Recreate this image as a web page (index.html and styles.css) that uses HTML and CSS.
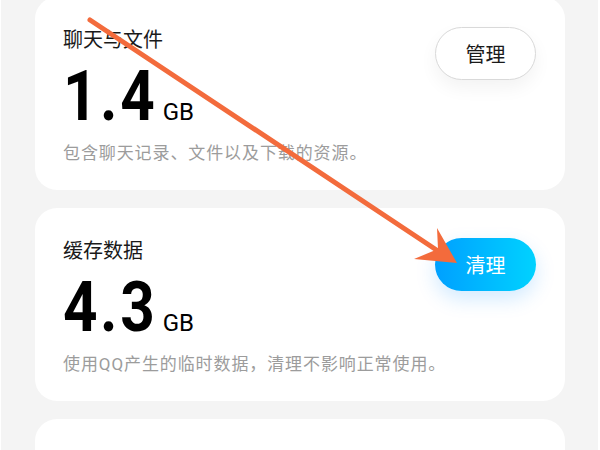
FILE: index.html
```html
<html lang="zh-CN">

<head>
    <meta charset="utf-8" />
    <title>存储空间</title>
    <link rel="stylesheet" href="styles.css">
</head>

<body>
    <div class="screen">
        <div class="cards">
            <div class="card">
                <div class="card-info">
                    <div class="card-title">聊天与文件</div>
                    <div class="card-size"><span class="card-number">1.4</span><span class="card-unit">GB</span></div>
                    <div class="card-desc">包含聊天记录、文件以及下载的资源。</div>
                </div>
                <div class="card-button">管理</div>
            </div>
            <div class="card">
                <div class="card-info">
                    <div class="card-title">缓存数据</div>
                    <div class="card-size"><span class="card-number">4.3</span><span class="card-unit">GB</span></div>
                    <div class="card-desc">使用QQ产生的临时数据，清理不影响正常使用。</div>
                </div>
                <div class="card-button card-button-primary">清理</div>
            </div>
            <div class="card card-empty"></div>
        </div>

        <!-- annotation arrow drawn over the screenshot -->
        <svg class="arrow" width="600" height="450" viewBox="0 0 600 450">
            <line x1="90" y1="20" x2="438" y2="251" stroke="#f36b3c" stroke-width="5" stroke-linecap="round" />
            <polygon points="457,263 437,228 438,249 414,259" fill="#f36b3c" />
        </svg>
    </div>
</body>

</html>
```

FILE: styles.css
```css
html {
    background: #ffffff;
}

body {
    margin: 0;
    font-family: Roboto, "Noto Sans CJK SC", sans-serif;
    color: #111;
}

.screen {
    position: relative;
    width: 597px;
    height: 450px;
    margin-left: 1px;
    background: #f4f4f4;
    overflow: hidden;
}

.cards {
    display: flex;
    flex-direction: column;
    gap: 18px;
    margin-top: -3px;
    padding: 0 33px 0 34px;
}

.card {
    display: flex;
    justify-content: space-between;
    align-items: flex-start;
    background: #ffffff;
    border-radius: 22px;
    padding: 30px 29px 0 28px;
    height: 193px;
    box-sizing: border-box;
}

.card-empty {
    height: 60px;
}

.card-info {
    min-width: 0;
}

.card-title {
    font-size: 20px;
    line-height: 26px;
    color: #1a1a1a;
}

.card-size {
    margin-top: 8px;
    height: 70px;
    font-size: 70px;
    line-height: 70px;
    white-space: nowrap;
    color: #000;
}

.card-number {
    display: inline-block;
    font-weight: bold;
    letter-spacing: 3px;
    transform: scaleX(0.86);
    transform-origin: left;
    margin-right: -15px;
}

.card-unit {
    margin-left: 5px;
    font-size: 24px;
    line-height: 24px;
}

.card-desc {
    margin-top: 10px;
    font-size: 17px;
    line-height: 24px;
    letter-spacing: 0.9px;
    white-space: nowrap;
    color: #9c9c9c;
}

.card-button {
    flex-shrink: 0;
    width: 101px;
    height: 53px;
    box-sizing: border-box;
    border-radius: 27px;
    border: 1px solid #d9d9d9;
    background: #ffffff;
    display: flex;
    justify-content: center;
    align-items: center;
    font-size: 20px;
    color: #1a1a1a;
    box-shadow: 0 8px 18px rgba(0, 0, 0, 0.05);
}

.card-button-primary {
    border: none;
    color: #ffffff;
    background: linear-gradient(to right, #00a0ff, #00d2ff);
    box-shadow: 0 8px 20px rgba(0, 140, 255, 0.18);
}

.arrow {
    position: absolute;
    left: -1px;
    top: 0;
}
```
